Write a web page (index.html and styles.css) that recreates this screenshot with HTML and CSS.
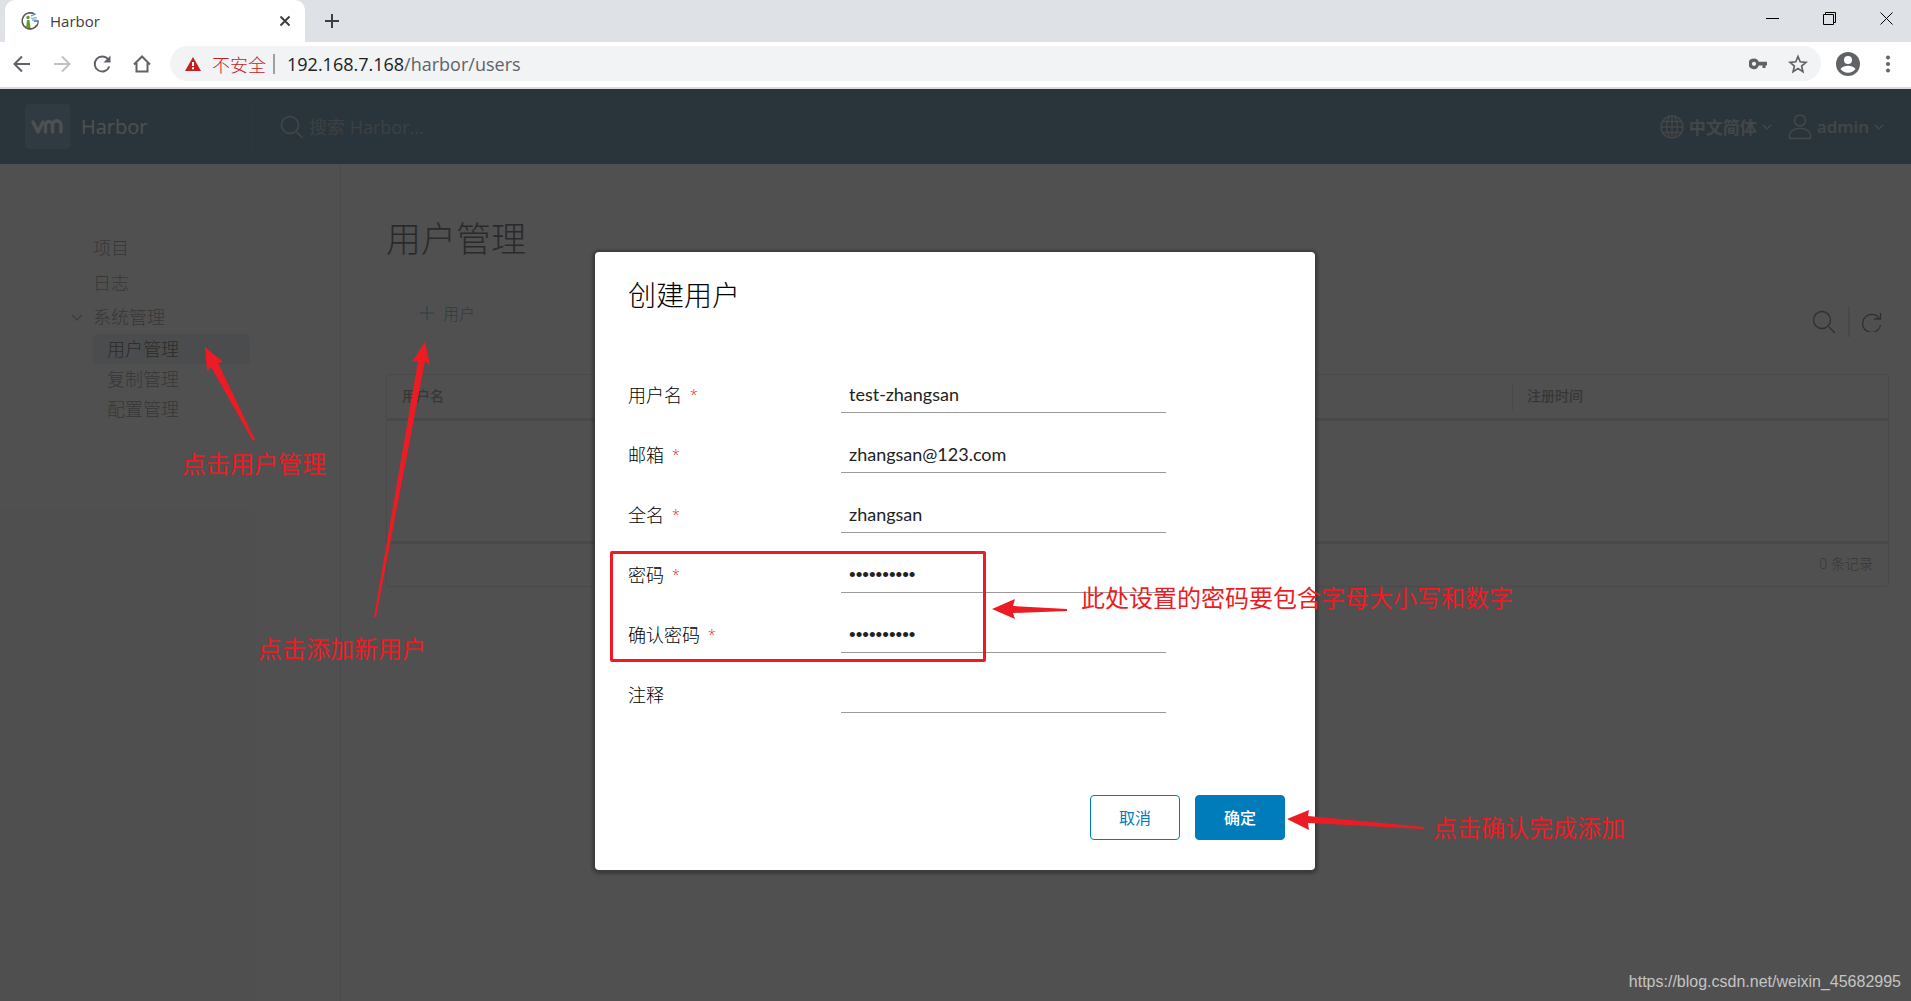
FILE: index.html
```html
<!DOCTYPE html>
<html lang="zh-CN">
<head>
<meta charset="utf-8">
<title>Harbor</title>
<link rel="stylesheet" href="styles.css">
</head>
<body>
<div class="browser">
  <div class="tabstrip">
    <div class="tab">
      <svg class="favicon" width="20" height="20" viewBox="0 0 20 20" fill="none"><path d="M14.5 3.2A8 8 0 1 0 17 14" stroke="#555" stroke-width="1.6"/><path d="M14 10h4.200a8 8 0 0 1-1.500 5" stroke="#666" stroke-width="1.300"/><path d="M11 4.500c2 .5 3-1.500 5-1M11 7c2 1 4-1 6 0M12 9c2 .6 3-.4 5 .4" stroke="#6b9bd1" stroke-width="1.200"/><path d="M6 17l1-8h2.500l1 8z" fill="#5f9d2f"/><circle cx="8" cy="6.500" r="1.700" fill="#5f9d2f"/></svg>
      <span class="tab-title">Harbor</span>
      <button class="plain" aria-label="关闭标签页"><svg width="12" height="12" viewBox="0 0 12 12" stroke="#3c4043" stroke-width="2"><path d="M1.500 1.500l9 9M10.500 1.500l-9 9"/></svg></button>
    </div>
    <button class="plain new-tab" aria-label="新标签页"><svg width="14" height="14" viewBox="0 0 14 14" stroke="#3c4043" stroke-width="2"><path d="M7 0v14M0 7h14"/></svg></button>
    <div class="window-controls">
      <button class="plain" aria-label="最小化"><svg width="14" height="14" viewBox="0 0 14 14" stroke="#000"><path d="M0 6.500h13"/></svg></button>
      <button class="plain" aria-label="还原"><svg width="14" height="14" viewBox="0 0 14 14" fill="none" stroke="#000"><path d="M.5 2.500h10v10H.5zM2.500 2.500v-2h10v10h-2"/></svg></button>
      <button class="plain" aria-label="关闭"><svg width="14" height="14" viewBox="0 0 14 14" stroke="#000"><path d="M.5.5l12 12M12.500.5l-12 12"/></svg></button>
    </div>
  </div>
  <div class="toolbar">
    <button class="plain" aria-label="后退"><svg width="20" height="20" viewBox="0 0 20 20" fill="none" stroke="#5f6368" stroke-width="2"><path d="M18 10H3M10 2.500L2.500 10l7.500 7.500"/></svg></button>
    <button class="plain" aria-label="前进"><svg width="20" height="20" viewBox="0 0 20 20" fill="none" stroke="#bdc1c6" stroke-width="2"><path d="M2 10h15M10 2.500l7.500 7.500-7.500 7.500"/></svg></button>
    <button class="plain" aria-label="刷新"><svg width="20" height="20" viewBox="0 0 20 20" fill="none" stroke="#5f6368" stroke-width="2"><path d="M16 5.200A7.500 7.500 0 1 0 17.300 12.500"/><path d="M18.500 1.500v7h-7z" fill="#5f6368" stroke="none"/></svg></button>
    <button class="plain" aria-label="主页"><svg width="20" height="20" viewBox="0 0 20 20" fill="none" stroke="#5f6368" stroke-width="2"><path d="M2 10.500L10 2.500l8 8M4.500 9v8.500h11V9"/></svg></button>
    <div class="address">
      <svg width="16" height="16" viewBox="0 0 16 16"><path d="M8 1l8 14H0z" fill="#c5221f"/><path d="M7 6h2v4H7zM7 11.200h2v2H7z" fill="#fff"/></svg>
      <span class="insecure">不安全</span>
      <span class="address-rule"></span>
      <span class="url">192.168.7.168<span class="url-path">/harbor/users</span></span>
      <button class="plain key" aria-label="密码"><svg width="18" height="12" viewBox="0 0 18 12"><path fill="#5f6368" fill-rule="evenodd" d="M5 .5a5.300 5.300 0 0 1 4.800 3.300H18v3.700h-1.500V10h-3V7.500H9.800A5.300 5.300 0 1 1 5 .5zm0 3.200a2.100 2.100 0 1 0 0 4.200 2.100 2.100 0 0 0 0-4.200z"/></svg></button>
      <button class="plain" aria-label="收藏"><svg width="20" height="20" viewBox="0 0 20 20" fill="none" stroke="#5f6368" stroke-width="1.700"><path d="M10 2.500l2.200 5.300 5.700.5-4.300 3.700 1.300 5.600-4.900-3-4.900 3 1.300-5.600L2.100 8.300l5.700-.5z"/></svg></button>
    </div>
    <button class="plain profile" aria-label="用户"><svg width="24" height="24" viewBox="0 0 24 24"><circle cx="12" cy="12" r="12" fill="#5f6368"/><circle cx="12" cy="8" r="4" fill="#fff"/><path d="M4.500 17c1.500-2.300 5-3.300 7.500-3.300s6 1 7.500 3.300c-1.700 2.400-4.400 3.800-7.500 3.800S6.200 19.400 4.500 17z" fill="#fff"/></svg></button>
    <button class="plain" aria-label="菜单"><svg width="4" height="18" viewBox="0 0 4 18" fill="#5f6368"><circle cx="2" cy="2.500" r="2"/><circle cx="2" cy="9" r="2"/><circle cx="2" cy="15.500" r="2"/></svg></button>
  </div>
</div>

<div class="app">
  <header class="header">
    <a class="brand" href="#">
      <svg class="logo" width="45" height="45" viewBox="0 0 45 45" fill="none"><rect width="45" height="45" rx="4" fill="#2a6a94"/><path d="M8 18l5 10 5-10M20.500 28v-7a3.300 3.300 0 0 1 7 0v7M27.500 21a4.200 4.200 0 0 1 8.500 0v7" stroke="#fafafa" stroke-width="3.400" stroke-linecap="round" stroke-linejoin="round"/></svg>
      <span>Harbor</span>
    </a>
    <label class="search">
      <svg width="24" height="24" viewBox="0 0 24 24" fill="none" stroke="#b0bcc4" stroke-width="1.500"><circle cx="10" cy="10" r="8.500"/><path d="M16.500 17l6 6"/></svg>
      <input type="search" placeholder="搜索 Harbor...">
    </label>
    <nav class="header-actions">
      <button class="plain header-button"><svg width="24" height="24" viewBox="0 0 24 24" fill="none" stroke="currentColor" stroke-width="1.300"><circle cx="12" cy="12" r="11"/><path d="M12 1v22M1 12h22M3 6.500h18M3 17.500h18M9.500 2C5.500 8 5.500 16 9.500 22M14.500 2c4 6 4 14 0 20"/></svg><span>中文简体</span><svg width="10" height="6" viewBox="0 0 10 6" fill="none" stroke="currentColor" stroke-width="1.400"><path d="M1 1l4 4 4-4"/></svg></button>
      <button class="plain header-button"><svg width="24" height="26" viewBox="0 0 24 26" fill="none" stroke="currentColor" stroke-width="1.500"><circle cx="12" cy="6.500" r="5.500"/><path d="M1.500 24.500V20c2-4 6-5.500 10.500-5.500S20.500 16 22.500 20v4.500z" stroke-linejoin="round"/></svg><span>admin</span><svg width="10" height="6" viewBox="0 0 10 6" fill="none" stroke="currentColor" stroke-width="1.400"><path d="M1 1l4 4 4-4"/></svg></button>
    </nav>
  </header>

  <div class="columns">
    <nav class="sidebar">
      <a class="nav-item" href="#">项目</a>
      <a class="nav-item" href="#">日志</a>
      <div class="nav-group">
        <svg width="12" height="8" viewBox="0 0 12 8" fill="none" stroke="#888" stroke-width="1.500"><path d="M1 1l5 5 5-5"/></svg>
        <a class="nav-item" href="#">系统管理</a>
      </div>
      <div class="nav-children">
        <a class="nav-sub active" href="#">用户管理</a>
        <a class="nav-sub" href="#">复制管理</a>
        <a class="nav-sub" href="#">配置管理</a>
      </div>
    </nav>
    <main class="main">
      <h1 class="page-title">用户管理</h1>
      <div class="actions">
        <button class="plain add-user"><svg width="14" height="14" viewBox="0 0 14 14" stroke="currentColor"><path d="M7 0v14M0 7h14"/></svg>用户</button>
        <div class="grid-tools">
          <button class="plain" aria-label="搜索"><svg width="24" height="24" viewBox="0 0 24 24" fill="none" stroke="#222" stroke-width="1.300"><circle cx="10" cy="10" r="8.500"/><path d="M17 17l6 6"/></svg></button>
          <span class="tool-rule"></span>
          <button class="plain" aria-label="刷新列表"><svg width="20" height="20" viewBox="0 0 20 20" fill="none" stroke="#222" stroke-width="1.300"><path d="M17.500 7A9 9 0 1 0 18.500 13M18.500 1v6h-6.500"/></svg></button>
        </div>
      </div>
      <table class="datagrid">
        <thead><tr><th>用户名</th><th class="wide"></th><th class="date">注册时间</th></tr></thead>
        <tbody><tr><td colspan="3"></td></tr></tbody>
        <tfoot><tr><td colspan="3">0 条记录</td></tr></tfoot>
      </table>
    </main>
  </div>

  <div class="backdrop">
    <form class="modal" role="dialog" aria-labelledby="dialog-title">
      <h2 class="modal-title" id="dialog-title">创建用户</h2>
      <div class="fields">
        <div class="field"><label for="username">用户名<span class="required">*</span></label><input id="username" type="text" value="test-zhangsan"></div>
        <div class="field"><label for="email">邮箱<span class="required">*</span></label><input id="email" type="text" value="zhangsan@123.com"></div>
        <div class="field"><label for="fullname">全名<span class="required">*</span></label><input id="fullname" type="text" value="zhangsan"></div>
        <div class="field"><label for="password">密码<span class="required">*</span></label><input id="password" type="password" value="Harbor1234"></div>
        <div class="field"><label for="confirm">确认密码<span class="required">*</span></label><input id="confirm" type="password" value="Harbor1234"></div>
        <div class="field"><label for="comment">注释</label><input id="comment" type="text"></div>
      </div>
      <div class="modal-footer">
        <button class="button" type="button">取消</button>
        <button class="button primary" type="button">确定</button>
      </div>
      <div class="mark-box"></div>
      <svg class="mark arrow-password" width="76" height="20" viewBox="0 0 76 20"><path d="M0 10L23 0l-2 7 54 3v2l-54 2 2 6z"/></svg>
      <p class="mark note-password">此处设置的密码要包含字母大小写和数字</p>
      <svg class="mark arrow-confirm" width="138" height="20" viewBox="0 0 138 20"><path d="M0 9L22 0l-1 6 116 11v2L21 13l1 7z"/></svg>
      <p class="mark note-confirm">点击确认完成添加</p>
    </form>
  </div>

  <svg class="mark arrow-nav" width="52" height="96" viewBox="0 0 52 96"><path d="M0 0l18 15-5 1 37 77-2 1L6 20l-4 4z"/></svg>
  <p class="mark note-nav">点击用户管理</p>
  <svg class="mark arrow-add" width="60" height="276" viewBox="0 0 60 276"><path d="M52 0l5 23-5-4L3 275H1L45 19l-6 1z"/></svg>
  <p class="mark note-add">点击添加新用户</p>
  <p class="watermark">https://blog.csdn.net/weixin_45682995</p>
</div>
</body>
</html>
```
FILE: styles.css
```css
* { box-sizing: border-box; }

body {
  margin: 0;
  min-height: 100vh;
  display: flex;
  flex-direction: column;
  font-family: "Open Sans", "Noto Sans CJK SC", sans-serif;
  font-size: 18px;
  color: #000;
}

a { color: inherit; text-decoration: none; }
h1, h2, p { margin: 0; font-weight: 300; }
svg { display: block; flex: none; }
input { font: inherit; outline: none; }

.plain {
  display: flex;
  align-items: center;
  padding: 0;
  border: 0;
  background: none;
  font: inherit;
  color: inherit;
}

/* Browser frame */
.tabstrip {
  display: flex;
  align-items: center;
  height: 42px;
  padding-left: 5px;
  background: #dee1e6;
}
.tab {
  display: flex;
  align-items: center;
  width: 300px;
  height: 42px;
  padding: 0 14px 0 15px;
  border-radius: 10px 10px 0 0;
  background: #fff;
}
.tab-title {
  flex: 1;
  padding-left: 10px;
  font-size: 15px;
  color: #3c4043;
}
.new-tab { margin-left: 20px; }
.window-controls {
  display: flex;
  gap: 43px;
  margin-left: auto;
  padding: 0 17px 4px 0;
}
.toolbar {
  display: flex;
  align-items: center;
  gap: 20px;
  height: 47px;
  padding: 0 21px 2px 12px;
  border-bottom: 2px solid #dadce0;
  background: #fff;
}
.address {
  flex: 1;
  display: flex;
  align-items: center;
  height: 35px;
  margin-left: -2px;
  padding: 0 13px 0 15px;
  border-radius: 18px;
  background: #f1f3f4;
}
.insecure { margin-left: 11px; font-weight: 300; color: #c5221f; }
.address-rule {
  width: 2px;
  height: 20px;
  margin: 0 12px 0 7px;
  background: #9aa0a6;
}
.url { flex: 1; color: #202124; }
.url-path { color: #5f6368; }
.key { margin-right: 21px; }
.profile { margin: 0 6px 0 -5px; }

/* Application shell */
.app {
  flex: 1;
  display: flex;
  flex-direction: column;
  position: relative;
  overflow: hidden;
  background: #fafafa;
}
.header {
  display: flex;
  align-items: center;
  height: 75px;
  padding: 0 27px 0 25px;
  background: #004a70;
}
.brand {
  display: flex;
  align-items: center;
  gap: 11px;
  width: 227px;
  height: 50px;
  border-right: 1px solid #26617f;
  font-size: 20px;
  color: #fafafa;
}
.search {
  flex: 1;
  display: flex;
  align-items: center;
  gap: 5px;
  padding-left: 28px;
}
.search input {
  width: 240px;
  padding: 0;
  border: 0;
  background: none;
  -webkit-appearance: none;
}
.search input::placeholder { color: #7b93a0; opacity: 1; }
.header-actions { display: flex; gap: 16px; color: #b0bcc4; }
.header-button { gap: 5px; font-size: 17px; font-weight: 600; }

.columns { flex: 1; display: flex; }
.sidebar {
  width: 341px;
  padding: 67px 90px 0 93px;
  border-right: 1px solid #ccc;
  color: #565656;
  font-weight: 300;
}
.nav-item { display: block; line-height: 35px; }
.nav-group {
  display: flex;
  align-items: center;
  gap: 10px;
  height: 33px;
  margin-left: -22px;
}
.nav-sub {
  display: block;
  padding-left: 14px;
  border-radius: 4px;
  line-height: 30px;
}
.active { background: #d9e4ea; color: #000; }

.main { flex: 1; padding: 50px 22px 0 45px; }
.page-title { font-size: 35px; line-height: 50px; }
.actions {
  display: flex;
  justify-content: space-between;
  align-items: center;
  height: 110px;
  padding: 0 7px 0 34px;
}
.add-user {
  gap: 9px;
  padding-bottom: 12px;
  font-size: 16px;
  font-weight: 300;
  color: #007cbb;
}
.grid-tools { display: flex; align-items: center; gap: 12px; padding-top: 6px; }
.tool-rule { width: 2px; height: 30px; background: #ccc; }

.datagrid {
  width: 100%;
  border: 1px solid #ccc;
  border-radius: 4px;
  border-spacing: 0;
  table-layout: fixed;
  font-size: 14px;
  color: #565656;
}
.datagrid th {
  height: 46px;
  padding: 0 15px 3px;
  border-bottom: 3px solid #ccc;
  text-align: left;
  font-weight: 500;
}
.datagrid .wide { width: 749px; }
.datagrid .date {
  background: linear-gradient(#ccc, #ccc) left center / 1px 28px no-repeat;
}
.datagrid tbody td { height: 123px; padding: 0; border-bottom: 3px solid #ccc; }
.datagrid tfoot td {
  height: 42px;
  padding: 0 15px 4px;
  text-align: right;
  font-weight: 300;
}

/* Dialog */
.backdrop {
  position: absolute;
  inset: 0;
  display: flex;
  justify-content: center;
  align-items: flex-start;
  padding: 163px 1px 0 0;
  background: rgba(49, 49, 49, .85);
}
.modal {
  position: relative;
  width: 720px;
  padding: 28px 30px 30px 33px;
  border-radius: 4px;
  background: #fff;
  box-shadow: 0 1px 3px 3px rgba(0, 0, 0, .25);
}
.modal-title { font-size: 28px; line-height: 30px; }
.fields { padding: 56px 0 69px; }
.field {
  display: grid;
  grid-template-columns: 213px 325px;
  height: 60px;
  padding: 12px 0 13px;
}
.field label { font-weight: 300; line-height: 34px; }
.field input {
  height: 35px;
  padding: 0 8px 2px;
  border: 0;
  border-bottom: 1px solid #9a9a9a;
  background: none;
  font-family: Lato, sans-serif;
  color: #222;
}
.field input[type="password"] {
  padding-bottom: 0;
  font-family: "Liberation Sans", sans-serif;
  font-size: 19px;
}
.required {
  margin-left: 8px;
  font-size: 14px;
  vertical-align: 2px;
  line-height: 1;
  color: #e62700;
}
.modal-footer { display: flex; justify-content: flex-end; gap: 15px; }
.button {
  width: 90px;
  height: 45px;
  padding: 0 0 2px;
  border: 1px solid #007cbb;
  border-radius: 4px;
  background: #fff;
  font: inherit;
  font-size: 16px;
  color: #007cbb;
}
.primary { background: #007cbb; color: #fff; font-weight: 500; }

/* Tutorial annotations */
.mark {
  position: absolute;
  fill: #ed1c24;
  color: #ed1c24;
  font-family: "Noto Sans CJK SC", sans-serif;
  font-size: 24px;
  font-weight: 400;
  line-height: 30px;
  white-space: nowrap;
}
.mark-box {
  position: absolute;
  top: 299px;
  left: 15px;
  width: 376px;
  height: 111px;
  border: 3px solid #ed1c24;
  border-radius: 2px;
}
.arrow-password { top: 347px; left: 397px; }
.note-password { top: 330px; left: 486px; }
.arrow-confirm { top: 558px; left: 692px; }
.note-confirm { top: 560px; left: 838px; }
.arrow-nav { top: 258px; left: 205px; }
.note-nav { top: 359px; left: 182px; }
.arrow-add { top: 253px; left: 373px; }
.note-add { top: 544px; left: 258px; }
.watermark {
  position: absolute;
  right: 10px;
  bottom: 9px;
  font: 16px/20px "Liberation Sans", sans-serif;
  color: #c4c4c4;
}
```
